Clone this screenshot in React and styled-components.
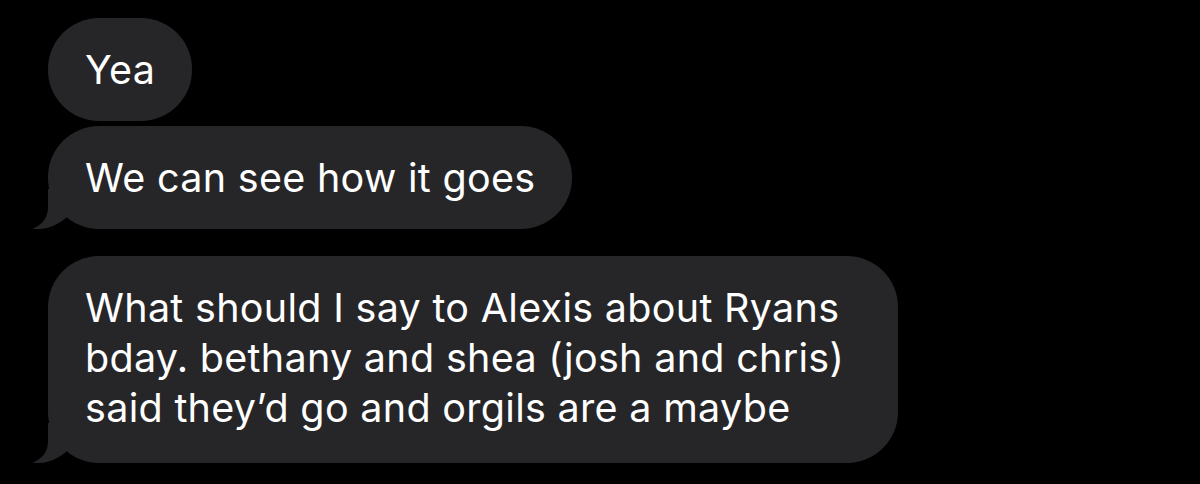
import React from 'react'
import styled, { createGlobalStyle } from 'styled-components'

const GlobalStyle = createGlobalStyle`
    html, body {
        margin: 0;
        padding: 0;
        background: #000;
    }
    body {
        font-family: Inter, "Liberation Sans", Arial, sans-serif;
        -webkit-font-smoothing: antialiased;
    }
`

const messages = [
    { key: 1, lines: ['Yea'] },
    { key: 2, lines: ['We can see how it goes'], tail: true, gap: 5 },
    {
        key: 3,
        lines: [
            'What should I say to Alexis about Ryans',
            'bday. bethany and shea (josh and chris)',
            'said they\u2019d go and orgils are a maybe',
        ],
        tail: true,
        gap: 27,
        width: 850,
    },
]

const Tail = () =>
    <TailSvg width="45" height="40" viewBox="0 0 45 40">
        <path d="M15,0 L15,18 C15,28 10,35 1.5,38.8 C0.4,39.3 0.6,40 1.6,40 C13,40.6 24,37 34,28 L44,0 Z" />
    </TailSvg>

export default function App() {
    return (
        <>
            <GlobalStyle />
            <Thread>
                {messages.map(({ key, lines, tail, gap, width }) =>
                    <Bubble key={key} $gap={gap} $width={width} $tall={lines.length > 1}>
                        {lines.map((line, i) => <Line key={i}>{line}</Line>)}
                        {tail && <Tail />}
                    </Bubble>
                )}
            </Thread>
        </>
    )
}

const
    Thread = styled.div`
        display: flex;
        flex-direction: column;
        align-items: flex-start;
        padding: 18px 0 0 48px;
        height: 484px;
        box-sizing: border-box;
        overflow: hidden;
    `,
    Bubble = styled.div`
        position: relative;
        box-sizing: border-box;
        margin-top: ${p => p.$gap || 0}px;
        width: ${p => p.$width ? `${p.$width}px` : 'auto'};
        padding: 27px 37px ${p => p.$tall ? 30 : 26}px 37px;
        border-radius: 51px;
        background: #262629;
        color: #fff;
        font-size: 39.5px;
        line-height: 50px;
        letter-spacing: 0.3px;
    `,
    Line = styled.div`
        white-space: nowrap;
    `,
    TailSvg = styled.svg`
        position: absolute;
        left: -15px;
        bottom: 0;
        fill: #262629;
    `
